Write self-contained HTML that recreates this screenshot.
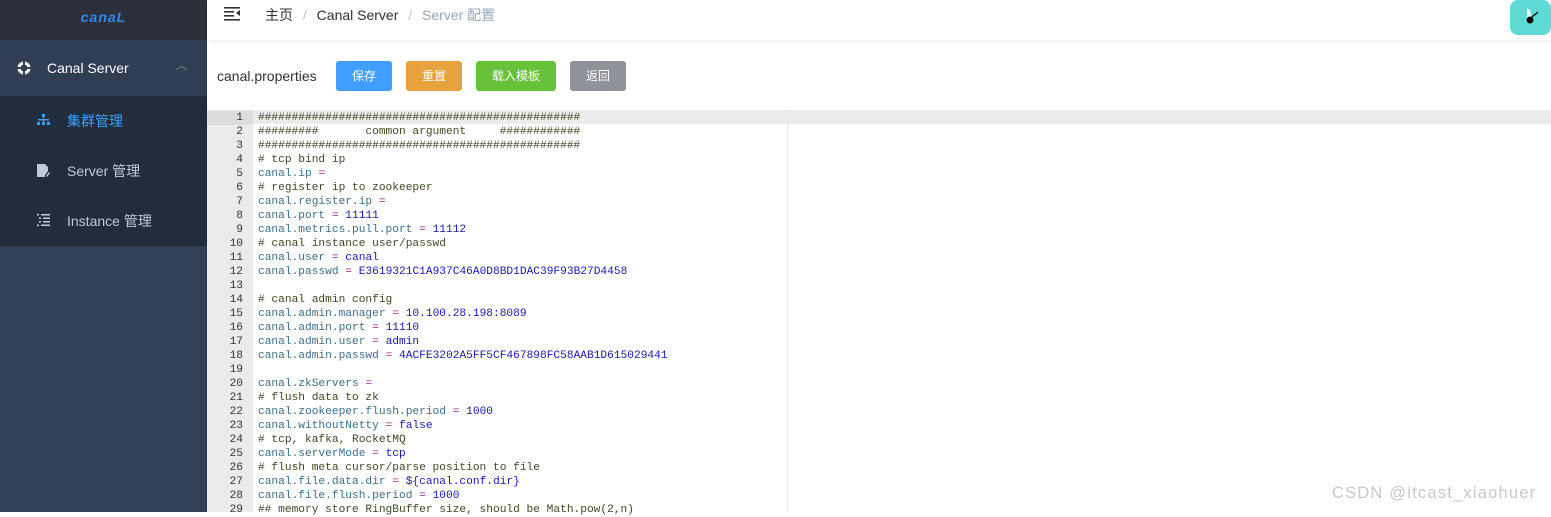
<!DOCTYPE html>
<html><head><meta charset="utf-8"><style>
*{margin:0;padding:0;box-sizing:border-box}
body{width:1551px;height:512px;overflow:hidden;font-family:"Liberation Sans","Noto Sans CJK SC",sans-serif;background:#fff;position:relative}
.side{position:absolute;left:0;top:0;width:207px;height:512px;background:#304156}
.logo{height:40px;background:#2b303b;text-align:center;font:italic bold 14px "Liberation Sans",sans-serif;color:#2d8cf0;line-height:34px;letter-spacing:1px}
.cs{height:56px;background:#2f3e52;color:#fff;font-size:14px;line-height:56px;padding-left:47px;position:relative}
.sub{background:#1f2d3d}
.sub div{height:50px;line-height:50px;padding-left:67px;color:#bfcbd9;font-size:14px;position:relative}
.hdr{position:absolute;left:207px;top:0;right:0;height:40px;box-shadow:0 1px 4px rgba(0,21,41,.08);font-size:14px;color:#303133;line-height:31px}
.btn{position:absolute;top:61px;height:30px;color:#fff;font-size:12px;text-align:center;line-height:30px;border-radius:3px}
.ed{position:absolute;left:207px;top:110px;right:0;bottom:0;font:11.2px/14px "Liberation Mono",monospace}
.gut{position:absolute;left:0;top:0;width:46px;height:402px;background:#ebebeb;text-align:right;color:#333}
.gut div{padding-right:10px}
.code{position:absolute;left:51px;top:1px;white-space:pre}
.c{color:#3b4a24}.k{color:#3c6e8c}.o{color:#a3218d}.v{color:#1a1aa6}
</style></head><body>
<div class="side">
<div class="logo">canaL</div>
<div class="cs"><svg style="position:absolute;left:17px;top:21px" width="14" height="14" viewBox="0 0 14 14"><circle cx="7" cy="7" r="5" fill="none" stroke="#fff" stroke-width="3"/><rect x="6" y="0" width="2" height="14" fill="#2f3e52"/><rect x="0" y="6" width="14" height="2" fill="#2f3e52"/></svg>Canal Server<span style="position:absolute;left:176px;top:-2px;color:#909399;font-size:11px">︿</span></div>
<div class="sub">
<div style="color:#409eff"><svg style="position:absolute;left:37px;top:18px" width="13" height="12" viewBox="0 0 13 12" fill="#409eff"><rect x="5" y="0" width="3" height="3"/><rect x="1" y="5" width="11" height="1.5"/><rect x="0" y="8" width="3" height="3"/><rect x="5" y="8" width="3" height="3"/><rect x="10" y="8" width="3" height="3"/><rect x="6" y="3" width="1" height="5"/></svg>集群管理</div>
<div><svg style="position:absolute;left:37px;top:18px" width="13" height="13" viewBox="0 0 13 13" fill="#bfcbd9"><path d="M0 0h8l3 3v4l-3 4v2H0z"/><path d="M9 12l3-4 1 1-3 4z"/></svg>Server 管理</div>
<div><svg style="position:absolute;left:37px;top:18px" width="13" height="12" viewBox="0 0 13 12" fill="#bfcbd9"><rect x="0" y="0" width="2" height="1.5"/><rect x="4" y="0" width="9" height="1.5"/><rect x="2" y="3.5" width="2" height="1.5"/><rect x="6" y="3.5" width="7" height="1.5"/><rect x="2" y="7" width="2" height="1.5"/><rect x="6" y="7" width="7" height="1.5"/><rect x="0" y="10.5" width="2" height="1.5"/><rect x="4" y="10.5" width="9" height="1.5"/></svg>Instance 管理</div>
</div>
</div>
<div class="hdr">
<svg style="position:absolute;left:17px;top:7px" width="16" height="14" viewBox="0 0 16 14" fill="#333"><rect x="0" y="0" width="16" height="1.6"/><rect x="0" y="4" width="10" height="1.6"/><rect x="0" y="8" width="10" height="1.6"/><rect x="0" y="12" width="16" height="1.6"/><path d="M16 3v6l-4-3z"/></svg>
<span style="position:absolute;left:58px">主页 <span style="color:#c0c4cc;margin:0 6px">/</span> Canal Server <span style="color:#c0c4cc;margin:0 6px">/</span> <span style="color:#97a8be">Server 配置</span></span>
<div style="position:absolute;right:0;top:0;width:41px;height:35px;background:#5fd9d3;border-radius:8px"><svg width="41" height="35" viewBox="0 0 41 35"><path d="M17 8l3 2 1 6-2 5-3 1 1-5z" fill="#fff"/><circle cx="20" cy="20" r="3.5" fill="#000"/><path d="M22 17l6-5" stroke="#000" stroke-width="1.2"/></svg></div>
</div>
<div style="position:absolute;left:217px;top:68px;font-size:14px;color:#303133">canal.properties</div>
<div class="btn" style="left:336px;width:56px;background:#409eff">保存</div>
<div class="btn" style="left:406px;width:56px;background:#e6a23c">重置</div>
<div class="btn" style="left:476px;width:80px;background:#67c23a">载入模板</div>
<div class="btn" style="left:570px;width:56px;background:#909399">返回</div>
<div class="ed">
<div style="position:absolute;left:0;right:0;top:0;height:14px;background:#ebebeb"></div>
<div style="position:absolute;left:580px;top:0;width:1px;height:402px;background:#e8e8e8"></div>
<div class="gut" style="padding-top:1px"><div style="background:#dcdcdc">1</div><div>2</div><div>3</div><div>4</div><div>5</div><div>6</div><div>7</div><div>8</div><div>9</div><div>10</div><div>11</div><div>12</div><div>13</div><div>14</div><div>15</div><div>16</div><div>17</div><div>18</div><div>19</div><div>20</div><div>21</div><div>22</div><div>23</div><div>24</div><div>25</div><div>26</div><div>27</div><div>28</div><div>29</div></div>
<div class="code"><span class="c">################################################
#########       common argument     ############
################################################
# tcp bind ip</span>
<span class="k">canal.ip</span> <span class="o">=</span>
<span class="c"># register ip to zookeeper</span>
<span class="k">canal.register.ip</span> <span class="o">=</span>
<span class="k">canal.port</span> <span class="o">=</span> <span class="v">11111</span>
<span class="k">canal.metrics.pull.port</span> <span class="o">=</span> <span class="v">11112</span>
<span class="c"># canal instance user/passwd</span>
<span class="k">canal.user</span> <span class="o">=</span> <span class="v">canal</span>
<span class="k">canal.passwd</span> <span class="o">=</span> <span class="v">E3619321C1A937C46A0D8BD1DAC39F93B27D4458</span>

<span class="c"># canal admin config</span>
<span class="k">canal.admin.manager</span> <span class="o">=</span> <span class="v">10.100.28.198:8089</span>
<span class="k">canal.admin.port</span> <span class="o">=</span> <span class="v">11110</span>
<span class="k">canal.admin.user</span> <span class="o">=</span> <span class="v">admin</span>
<span class="k">canal.admin.passwd</span> <span class="o">=</span> <span class="v">4ACFE3202A5FF5CF467898FC58AAB1D615029441</span>

<span class="k">canal.zkServers</span> <span class="o">=</span>
<span class="c"># flush data to zk</span>
<span class="k">canal.zookeeper.flush.period</span> <span class="o">=</span> <span class="v">1000</span>
<span class="k">canal.withoutNetty</span> <span class="o">=</span> <span class="v">false</span>
<span class="c"># tcp, kafka, RocketMQ</span>
<span class="k">canal.serverMode</span> <span class="o">=</span> <span class="v">tcp</span>
<span class="c"># flush meta cursor/parse position to file</span>
<span class="k">canal.file.data.dir</span> <span class="o">=</span> <span class="v">${canal.conf.dir}</span>
<span class="k">canal.file.flush.period</span> <span class="o">=</span> <span class="v">1000</span>
<span class="c">## memory store RingBuffer size, should be Math.pow(2,n)</span></div>
</div>
<div style="position:absolute;left:1332px;top:484px;font-size:16.5px;color:#c8c8c8;letter-spacing:1.2px">CSDN @itcast_xiaohuer</div>
</body></html>
